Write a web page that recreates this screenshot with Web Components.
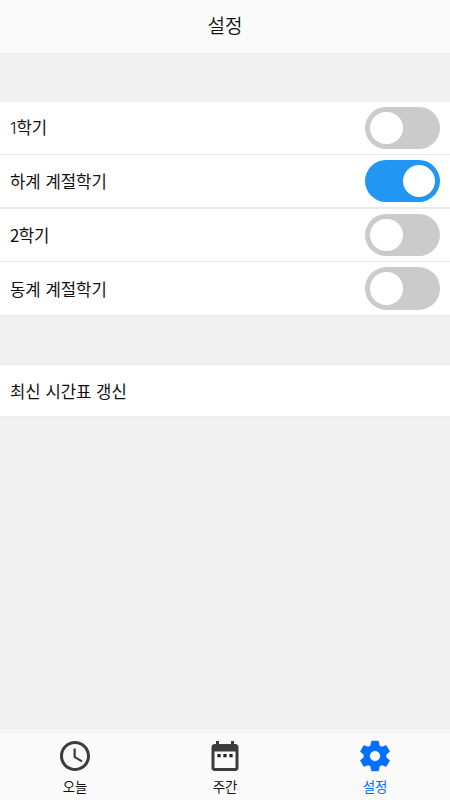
<!DOCTYPE html>
<html lang="ko">
<head>
<meta charset="utf-8">
<title>설정</title>
<style>
html, body { margin: 0; height: 100%; }
body { font-family: "Noto Sans CJK KR", sans-serif; color: #111; overflow: hidden; }
</style>
</head>
<body>
<settings-page></settings-page>
<script>
function define(name, html, setup) {
  const template = document.createElement('template');
  template.innerHTML = html;
  customElements.define(name, class extends HTMLElement {
    constructor() {
      super();
      this.attachShadow({ mode: 'open' }).append(template.content.cloneNode(true));
    }
    connectedCallback() { if (setup) setup(this); }
  });
}

define('title-bar', `
<style>
:host { display: flex; align-items: center; justify-content: center; box-sizing: border-box; height: 54px; padding-bottom: 4px; background: #fafafa; border-bottom: 1px solid #ededed; font-size: 19px; line-height: 28px; font-weight: 350; }
</style><slot></slot>`);

define('toggle-switch', `
<style>
:host { display: flex; align-items: center; box-sizing: border-box; width: 75px; height: 42.5px; padding: 0 5px; border-radius: 22px; background: #cbcbcb; cursor: pointer; }
:host([checked]) { justify-content: flex-end; background: #2196f3; }
span { width: 32.5px; height: 32.5px; border-radius: 50%; background: #fff; }
</style><span></span>`, el => {
  el.setAttribute('role', 'switch');
  el.addEventListener('click', () => el.toggleAttribute('checked'));
});

define('settings-group', `
<style>
:host { display: flex; flex-direction: column; gap: 1.4px; background: #e9e9e9; border-top: 1px solid #ebebeb; border-bottom: 1px solid #ebebeb; }
</style><slot></slot>`);

define('settings-row', `
<style>
:host { display: flex; align-items: center; justify-content: space-between; box-sizing: border-box; height: var(--row-height, 52.3px); padding: 0 10px; background: #fff; font-size: 16.7px; line-height: 24px; }
</style><span><slot></slot></span><slot name="control"></slot>`);

define('tab-item', `
<style>
:host { flex: 1; display: flex; flex-direction: column; align-items: center; color: #111; font-size: 13.4px; line-height: 20px; --icon: #3c3c3e; }
:host([active]) { color: #006fff; --icon: #006fff; }
::slotted(svg) { width: 36px; height: 36px; fill: var(--icon); display: block; }
span { margin-top: 2px; }
</style><slot name="icon"></slot><span><slot></slot></span>`);

define('tab-bar', `
<style>
:host { display: flex; box-sizing: border-box; height: 70px; padding-top: 7px; background: #fafafa; border-top: 1px solid #fdfdfd; box-shadow: inset 0 1px #eee; }
</style><slot></slot>`);

define('settings-page', `
<style>
:host { display: flex; flex-direction: column; height: 100vh; background: #f0f0f0; }
main { flex: 1; display: flex; flex-direction: column; gap: 48.6px; padding-top: 47px; }
.one { font-family: Inter, sans-serif; font-size: 16.4px; font-weight: 300; }
.two { letter-spacing: -.5px; }
</style>
<title-bar>설정</title-bar>
<main>
  <settings-group>
    <settings-row style="--row-height:51.6px"><span class="one">1</span>학기<toggle-switch slot="control"></toggle-switch></settings-row>
    <settings-row>하계 계절학기<toggle-switch slot="control" checked></toggle-switch></settings-row>
    <settings-row><span class="two">2</span>학기<toggle-switch slot="control"></toggle-switch></settings-row>
    <settings-row>동계 계절학기<toggle-switch slot="control"></toggle-switch></settings-row>
  </settings-group>
  <settings-group style="--row-height:51px"><settings-row>최신 시간표 갱신</settings-row></settings-group>
</main>
<tab-bar>
  <tab-item>
    <svg slot="icon" viewBox="0 0 24 24"><path d="M11.99 2C6.47 2 2 6.48 2 12s4.47 10 9.99 10C17.52 22 22 17.52 22 12S17.52 2 11.99 2zM12 20c-4.42 0-8-3.58-8-8s3.58-8 8-8 8 3.58 8 8-3.58 8-8 8zm.5-13H11v6l5.25 3.15.75-1.23-4.5-2.67z"/></svg>오늘</tab-item>
  <tab-item>
    <svg slot="icon" viewBox="0 0 24 24"><path d="M19 4h-1V2h-2v2H8V2H6v2H5c-1.11 0-1.99.9-1.99 2L3 20c0 1.1.89 2 2 2h14c1.1 0 2-.9 2-2V6c0-1.1-.9-2-2-2zm0 16H5V9h14v11z"/><path fill="#222" d="M9.1 10.7H6.9v2.2h2.2zm4 0h-2.2v2.2h2.2zm4 0h-2.2v2.2h2.2z"/></svg>주간</tab-item>
  <tab-item active>
    <svg slot="icon" viewBox="0 0 24 24"><path stroke="#006fff" stroke-width=".25" d="M19.43 12.98c.04-.32.07-.64.07-.98s-.03-.66-.07-.98l2.11-1.65c.19-.15.24-.42.12-.64l-2-3.46c-.12-.22-.39-.3-.61-.22l-2.49 1c-.52-.4-1.08-.73-1.69-.98l-.38-2.65C14.46 2.18 14.25 2 14 2h-4c-.25 0-.46.18-.49.42l-.38 2.65c-.61.25-1.17.59-1.69.98l-2.49-1c-.23-.09-.49 0-.61.22l-2 3.46c-.13.22-.07.49.12.64l2.11 1.65c-.04.32-.07.65-.07.98s.03.66.07.98l-2.11 1.65c-.19.15-.24.42-.12.64l2 3.46c.12.22.39.3.61.22l2.49-1c.52.4 1.08.73 1.69.98l.38 2.65c.03.24.24.42.49.42h4c.25 0 .46-.18.49-.42l.38-2.65c.61-.25 1.17-.59 1.69-.98l2.49 1c.23.09.49 0 .61-.22l2-3.46c.12-.22.07-.49-.12-.64l-2.11-1.65zM12 15.5c-1.93 0-3.5-1.57-3.5-3.5s1.57-3.5 3.5-3.5 3.5 1.57 3.5 3.5-1.57 3.5-3.5 3.5z"/></svg>설정</tab-item>
</tab-bar>`);
</script>
</body>
</html>
